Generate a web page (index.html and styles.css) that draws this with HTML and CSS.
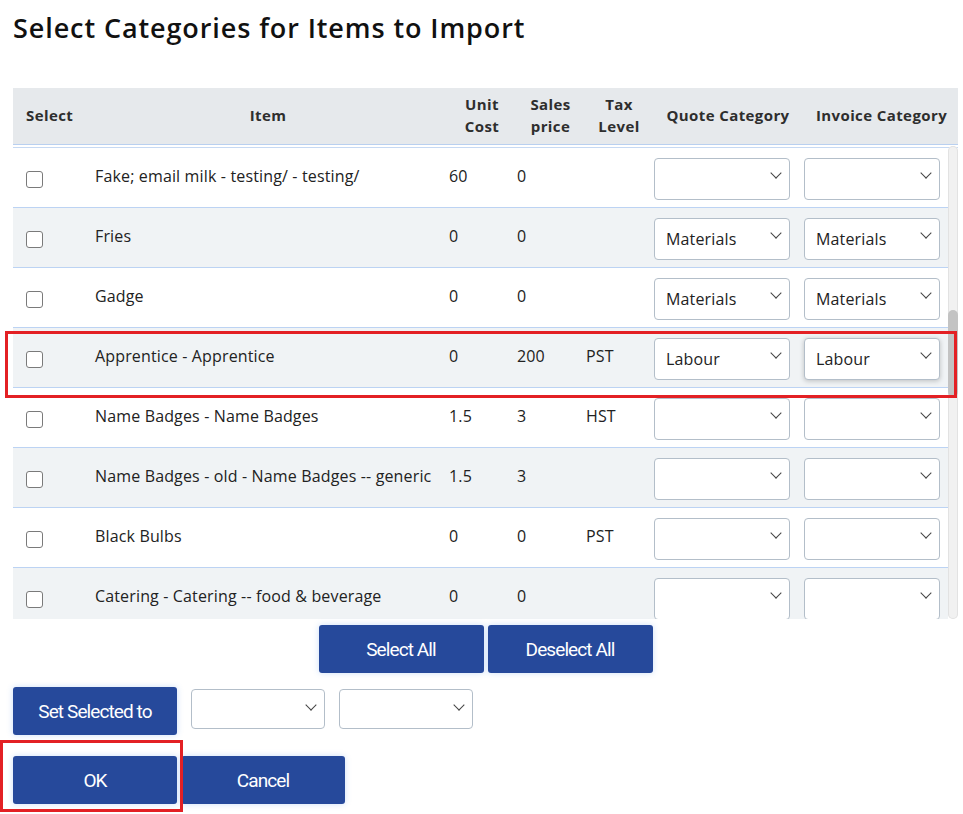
FILE: index.html
```
<!DOCTYPE html>
<html lang="en">
<head>
  <meta charset="UTF-8">
  <meta name="viewport" content="width=device-width, initial-scale=1.0">
  <title>Select Categories for Items to Import</title>
  <link rel="stylesheet" href="styles.css">
</head>
<body>

  <div class="page">
    <h1 class="title">Select Categories for Items to Import</h1>

    <table class="items-head">
      <colgroup>
        <col style="width:69px"><col style="width:354px"><col style="width:68px"><col style="width:69px">
        <col style="width:68px"><col style="width:150px"><col style="width:167px">
      </colgroup>
      <tr>
        <th class="col-select">Select</th>
        <th class="col-item">Item</th>
        <th>Unit<br>Cost</th>
        <th>Sales<br>price</th>
        <th>Tax<br>Level</th>
        <th>Quote Category</th>
        <th class="col-last">Invoice Category</th>
      </tr>
    </table>

    <div class="items-scroll">
      <div class="items-body">
        <table class="items">
          <colgroup>
            <col style="width:69px"><col style="width:354px"><col style="width:68px"><col style="width:69px">
            <col style="width:68px"><col style="width:150px"><col style="width:157px">
          </colgroup>
          <tr>
            <td><input type="checkbox" class="check"></td>
            <td>Fake; email milk - testing/ - testing/</td>
            <td>60</td><td>0</td><td></td>
            <td><div class="pick"><select><option></option><option>Materials</option><option>Labour</option></select></div></td>
            <td><div class="pick"><select><option></option><option>Materials</option><option>Labour</option></select></div></td>
          </tr>
          <tr>
            <td><input type="checkbox" class="check"></td>
            <td>Fries</td>
            <td>0</td><td>0</td><td></td>
            <td><div class="pick"><select><option selected>Materials</option><option>Labour</option></select></div></td>
            <td><div class="pick"><select><option selected>Materials</option><option>Labour</option></select></div></td>
          </tr>
          <tr>
            <td><input type="checkbox" class="check"></td>
            <td>Gadge</td>
            <td>0</td><td>0</td><td></td>
            <td><div class="pick"><select><option selected>Materials</option><option>Labour</option></select></div></td>
            <td><div class="pick"><select><option selected>Materials</option><option>Labour</option></select></div></td>
          </tr>
          <tr>
            <td><input type="checkbox" class="check"></td>
            <td>Apprentice - Apprentice</td>
            <td>0</td><td>200</td><td>PST</td>
            <td><div class="pick"><select><option>Materials</option><option selected>Labour</option></select></div></td>
            <td><div class="pick pick-focus"><select><option>Materials</option><option selected>Labour</option></select></div></td>
          </tr>
          <tr>
            <td><input type="checkbox" class="check"></td>
            <td>Name Badges - Name Badges</td>
            <td>1.5</td><td>3</td><td>HST</td>
            <td><div class="pick"><select><option></option><option>Materials</option><option>Labour</option></select></div></td>
            <td><div class="pick"><select><option></option><option>Materials</option><option>Labour</option></select></div></td>
          </tr>
          <tr>
            <td><input type="checkbox" class="check"></td>
            <td>Name Badges - old - Name Badges -- generic</td>
            <td>1.5</td><td>3</td><td></td>
            <td><div class="pick"><select><option></option><option>Materials</option><option>Labour</option></select></div></td>
            <td><div class="pick"><select><option></option><option>Materials</option><option>Labour</option></select></div></td>
          </tr>
          <tr>
            <td><input type="checkbox" class="check"></td>
            <td>Black Bulbs</td>
            <td>0</td><td>0</td><td>PST</td>
            <td><div class="pick"><select><option></option><option>Materials</option><option>Labour</option></select></div></td>
            <td><div class="pick"><select><option></option><option>Materials</option><option>Labour</option></select></div></td>
          </tr>
          <tr>
            <td><input type="checkbox" class="check"></td>
            <td>Catering - Catering -- food &amp; beverage</td>
            <td>0</td><td>0</td><td></td>
            <td><div class="pick"><select><option></option><option>Materials</option><option>Labour</option></select></div></td>
            <td><div class="pick"><select><option></option><option>Materials</option><option>Labour</option></select></div></td>
          </tr>
        </table>
      </div>
      <div class="scrollbar"><div class="scroll-thumb"></div></div>
    </div>

    <div class="select-row">
      <button class="btn">Select All</button>
      <button class="btn">Deselect All</button>
    </div>

    <div class="set-row">
      <button class="btn btn-set">Set Selected to</button>
      <div class="pick pick-small"><select><option></option><option>Materials</option><option>Labour</option></select></div>
      <div class="pick pick-small"><select><option></option><option>Materials</option><option>Labour</option></select></div>
    </div>

    <div class="action-row">
      <button class="btn btn-set">OK</button>
      <button class="btn btn-set">Cancel</button>
    </div>

    <div class="mark mark-row"></div>
    <div class="mark mark-ok"></div>
  </div>

</body>
</html>
```

FILE: styles.css
```
body {
  margin: 0;
  padding: 0;
  background-color: white;
  font-family: "Open Sans", Arial, sans-serif;
  color: #222;
}
.page {
  position: relative;
  width: 945px;
  padding: 12px 13px 10px;
}
.title {
  margin: 0 0 45px;
  font-size: 27px;
  line-height: 31px;
  font-weight: 600;
  letter-spacing: 0.9px;
  color: #111;
}

/* header */
.items-head {
  width: 945px;
  table-layout: fixed;
  border-collapse: collapse;
  background-color: #e6e9ec;
  border-bottom: 1px solid #b9d0f0;
}
.items-head th {
  height: 53px;
  padding: 0 0 3px 24px;
  font-size: 15px;
  line-height: 22px;
  font-weight: 700;
  letter-spacing: 0.4px;
  color: #2e2e2e;
  text-align: center;
  white-space: nowrap;
}
.items-head th.col-select {
  text-align: left;
  padding-left: 13px;
}
.items-head th.col-item {
  padding-left: 18px;
}
.items-head th.col-last {
  padding-right: 10px;
}

/* body */
.items-scroll {
  display: flex;
  margin-top: 2px;
  border-top: 1px solid #c6d9f3;
}
.items-body {
  flex: 1;
  height: 471px;
  overflow: hidden;
}
.items {
  width: 935px;
  table-layout: fixed;
  border-collapse: collapse;
}
.items td {
  height: 56px;
  padding: 0 0 3px 13px;
  font-size: 16px;
  letter-spacing: 0.15px;
  white-space: nowrap;
  border-bottom: 1px solid #bcd3f3;
  vertical-align: middle;
}
.items tr:nth-child(even) td {
  background-color: #f0f3f5;
}
.check {
  appearance: none;
  -webkit-appearance: none;
  display: block;
  width: 17px;
  height: 17px;
  margin: 6px 0 0;
  border: 1.5px solid #7a7a7a;
  border-radius: 3px;
  background-color: white;
}
.scrollbar {
  width: 10px;
  margin-top: -2px;
  background-color: #f1f1f1;
  border-radius: 5px;
  box-shadow: inset 0 0 0 1px #e2e2e2;
}
.scroll-thumb {
  height: 87px;
  margin-top: 164px;
  background-color: #c3c3c3;
  border-radius: 5px;
}

/* selects */
.pick {
  position: relative;
  width: 136px;
  height: 42px;
  margin-top: 5px;
}
.pick select {
  appearance: none;
  -webkit-appearance: none;
  width: 100%;
  height: 100%;
  padding: 0 0 0 11px;
  border: 1px solid #b3bec9;
  border-radius: 4px;
  background-color: white;
  font-family: "Open Sans", Arial, sans-serif;
  font-size: 16px;
  letter-spacing: 0.15px;
  color: #222;
  outline: none;
}
.pick::after {
  content: "";
  position: absolute;
  right: 10px;
  top: 11px;
  width: 8px;
  height: 8px;
  box-sizing: border-box;
  border-right: 1.5px solid #444;
  border-bottom: 1.5px solid #444;
  transform: rotate(45deg);
  pointer-events: none;
}
.pick-focus select {
  box-shadow: 0 1px 5px rgba(0,0,0,0.22);
}
.pick-small {
  width: 134px;
  height: 40px;
  margin-top: 2px;
}
.pick-small::after {
  top: 12px;
}

/* buttons */
.btn {
  width: 165px;
  height: 48px;
  border: none;
  border-radius: 3px;
  background-color: #26499b;
  color: white;
  font-family: Roboto, Arial, sans-serif;
  font-size: 19px;
  letter-spacing: -0.9px;
  box-shadow: 0 0 6px rgba(60,130,230,0.25);
  cursor: pointer;
}
.btn-set {
  width: 164px;
}
.select-row {
  display: flex;
  justify-content: center;
  gap: 4px;
  margin-top: 6px;
}
.set-row {
  display: flex;
  align-items: flex-start;
  gap: 14px;
  margin-top: 14px;
}
.action-row {
  display: flex;
  gap: 4px;
  margin-top: 21px;
}

/* red annotation boxes */
.mark {
  position: absolute;
  border: 3px solid #e32024;
  pointer-events: none;
}
.mark-row {
  left: 5px;
  top: 331px;
  width: 946px;
  height: 61px;
}
.mark-ok {
  left: 0;
  top: 740px;
  width: 177px;
  height: 66px;
}
```
